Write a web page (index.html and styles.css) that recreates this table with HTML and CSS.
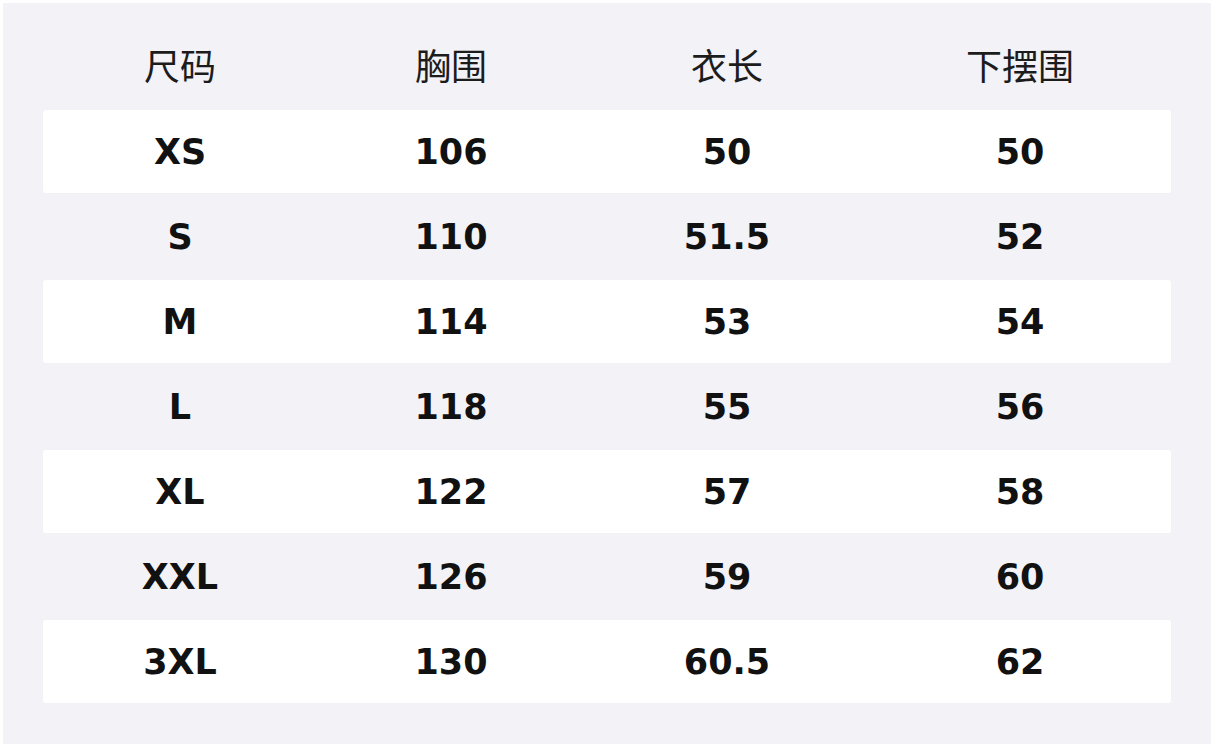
FILE: index.html
```html
<!DOCTYPE html>
<html lang="zh">
<head>
<meta charset="utf-8">
<link rel="stylesheet" href="styles.css">
</head>
<body>
<div class="sheet">
  <div class="row head">
    <div>尺码</div><div>胸围</div><div>衣长</div><div>下摆围</div>
  </div>
  <div class="row odd"><div>XS</div><div>106</div><div>50</div><div>50</div></div>
  <div class="row"><div>S</div><div>110</div><div>51.5</div><div>52</div></div>
  <div class="row odd"><div>M</div><div>114</div><div>53</div><div>54</div></div>
  <div class="row"><div>L</div><div>118</div><div>55</div><div>56</div></div>
  <div class="row odd"><div>XL</div><div>122</div><div>57</div><div>58</div></div>
  <div class="row"><div>XXL</div><div>126</div><div>59</div><div>60</div></div>
  <div class="row odd"><div>3XL</div><div>130</div><div>60.5</div><div>62</div></div>
</div>
</body>
</html>
```

FILE: styles.css
```css
html, body {
  margin: 0;
  background: #ffffff;
}
body {
  padding: 3px;
}
.sheet {
  width: 1128px;
  height: 661px;
  background: #f2f2f7;
  padding: 40px;
  display: flex;
  flex-direction: column;
  gap: 2px;
  color: #111111;
}
.row {
  display: grid;
  grid-template-columns: 274px 268px 284px 302px;
  height: 83px;
  align-items: center;
  text-align: center;
  font-family: "DejaVu Sans", sans-serif;
  font-weight: bold;
  font-size: 35px;
  border-radius: 2px;
}
.row.odd {
  background: #ffffff;
  box-shadow: 0 0 1px rgba(0, 0, 0, 0.06);
}
.row.head {
  height: 65px;
  padding-top: 3px;
  box-sizing: border-box;
  align-items: start;
  font-family: "Noto Sans CJK SC", "Noto Sans", sans-serif;
  font-weight: normal;
  font-size: 36px;
  line-height: 36px;
  color: #1c1c1c;
}
```
